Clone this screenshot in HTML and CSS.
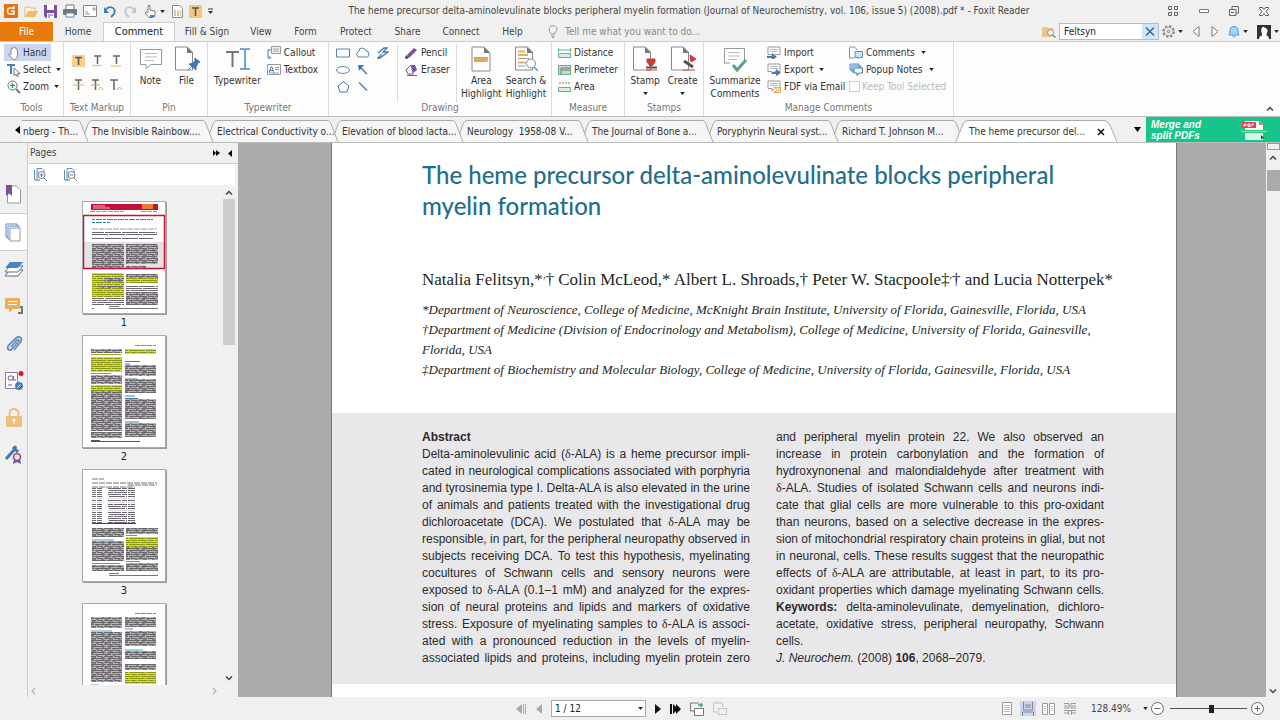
FILE: index.html
```
<!DOCTYPE html>
<html lang="en">
<head>
<meta charset="utf-8">
<title>Foxit Reader</title>
<link rel="stylesheet" href="styles.css">
</head>
<body>
<svg class="defs" aria-hidden="true">
  <defs>
    <pattern id="ink" width="17" height="6" patternUnits="userSpaceOnUse">
      <rect width="17" height="6" fill="#b9b7ba"/>
      <path d="M0 .5h6M7 .5h10M0 2.5h11M12 2.5h5M0 4.5h3M4 4.5h9M14 4.5h3" stroke="#6a666c"/>
      <path d="M2 1.5h2M8 1.5h3M5 3.5h3M13 3.5h2M1 5.5h3M9 5.5h4" stroke="#88838a"/>
    </pattern>
    <pattern id="inky" width="17" height="6" patternUnits="userSpaceOnUse">
      <rect width="17" height="6" fill="#dbe60f"/>
      <path d="M0 .5h6M7 .5h10M0 2.5h11M12 2.5h5M0 4.5h3M4 4.5h9M14 4.5h3" stroke="#8c9414"/>
    </pattern>
    <pattern id="rows" width="17" height="6" patternUnits="userSpaceOnUse">
      <path d="M0 .5h4M5 .5h12M0 2.5h8M9 2.5h8M0 4.5h13M14 4.5h3" stroke="#6a6570"/>
    </pattern>
    <symbol id="caret" viewBox="0 0 6 4"><path d="M0 0h6L3 4z" fill="#222"/></symbol>
    <symbol id="note" viewBox="0 0 14 12"><path d="M1 1h12v7.500H8L5 11V8.500H1z" fill="#fff" stroke="#999"/><path d="M3 3.500h8M3 5.500h8" stroke="#bbb"/></symbol>
    <symbol id="slant" viewBox="0 0 14 22"><path d="M-1 .5C2 .5 2 2 3 4L10 22H4L7 14 10 4C11 2 12 .5 15 .5V22H-1z" fill="#f6f6f6"/><path d="M-1 .5C2 .5 2 2 3 4L10 22M6.500 14L10 4C11 2 12 .5 15 .5" fill="none" stroke="#aaa"/></symbol>
    <symbol id="up" viewBox="0 0 8 5"><path d="M1 4.500L4 1.500 7 4.500" fill="none" stroke="#444" stroke-width="1.500"/></symbol>
    <symbol id="page" viewBox="0 0 20 26"><path d="M1 1h12l6 6v18H1z" fill="#fff" stroke="#888"/><path d="M13 1v6h6z" fill="#777"/></symbol>
  </defs>
</svg>
<div class="app">
  <header class="titlebar">
    <div class="quick">
      <svg width="14" height="14" viewBox="0 0 14 14"><rect width="14" height="14" rx="1" fill="#e8710c"/><path d="M10 4H6Q3.500 4 3.500 7t2.500 3h4V7H7M10 2v3" fill="none" stroke="#fff" stroke-width="1.500"/></svg>
      <button aria-label="Open"><svg width="14" height="13" viewBox="0 0 14 13"><path d="M1 12V2h4l1 1h5v3" fill="#fff3d9" stroke="#e2b873"/><path d="M1 12L4 6h10l-3 6z" fill="#eebb6c"/></svg></button>
      <button aria-label="Save"><svg width="13" height="13" viewBox="0 0 13 13"><path d="M0 0h13v13H2L0 11z" fill="#79509c"/><path d="M3 0h7v5H3zM3 8h7v5H3z" fill="#fff"/><path d="M4 10h5M4 12h2" stroke="#79509c"/></svg></button>
      <button aria-label="Print"><svg width="14" height="14" viewBox="0 0 14 14"><path d="M3 5V1h8v4" fill="#fff" stroke="#777"/><rect y="5" width="14" height="6" rx="1" fill="#777"/><path d="M3 9h8v4H3z" fill="#fff" stroke="#5b8bb8"/></svg></button>
      <button aria-label="Email"><svg width="14" height="12" viewBox="0 0 14 12"><path d="M.5.5h13v11H.5z" fill="#fff" stroke="#888"/><path d="M2 9h5M2 7h3M10 3h2v2h-2z" stroke="#999" fill="none"/></svg></button>
      <button aria-label="Undo"><svg width="14" height="13" viewBox="0 0 14 13"><path d="M2 6Q5 1 9 2.500T11 9L8 12" fill="none" stroke="#447bb0" stroke-width="1.800"/><path d="M1 2v6h5z" fill="#447bb0"/></svg></button>
      <button aria-label="Redo"><svg width="14" height="13" viewBox="0 0 14 13"><path d="M12 6Q9 1 5 2.500T3 9l3 3" fill="none" stroke="#c3c6c9" stroke-width="1.800"/><path d="M13 2v6H8z" fill="#c3c6c9"/></svg></button>
      <button class="handtool" aria-label="Touch mode"><svg width="13" height="14" viewBox="0 0 13 14"><path d="M4 8V2q1-2 2 0v4l5 1v4l-2 2.500H5L1 9q1-2 3 0" fill="#fff" stroke="#707880"/><path d="M6 12h5" stroke="#4a80b5" stroke-width="2"/></svg><svg width="5" height="3"><use href="#caret"/></svg></button>
      <button aria-label="Form"><svg width="11" height="13" viewBox="0 0 11 13"><path d="M.5.5h7l3 3v9H.5z" fill="#fff" stroke="#888"/><path d="M2 6h7M2 8h7M2 10h7" stroke="#a8894b" stroke-dasharray="2 1"/></svg></button>
      <button aria-label="Highlight"><svg width="13" height="13" viewBox="0 0 13 13"><rect width="13" height="13" fill="#f4c67c"/><path d="M3 3h7M6.500 3v8" stroke="#555" stroke-width="1.500"/></svg></button>
      <button aria-label="Customize"><svg width="5" height="7" viewBox="0 0 5 7"><path d="M0 1h5" stroke="#333"/><path d="M0 3h5L2.500 6z" fill="#333"/></svg></button>
    </div>
    <h1 class="doctitle">The heme precursor delta-aminolevulinate blocks peripheral myelin formation (Journal of Neurochemistry, vol. 106, issue 5) (2008).pdf * - Foxit Reader</h1>
    <div class="winbtns">
      <button aria-label="Arrange"><svg width="12" height="11" viewBox="0 0 12 11" fill="none" stroke="#666"><path d="M1.500.5h3v3h-3zM7.500.5h3v3h-3zM1.500 6.500h3v3h-3zM7.500 6.500h3v3h-3z"/></svg></button>
      <button aria-label="Minimize"><svg width="10" height="4" viewBox="0 0 10 4"><path d="M.5.5h9v3h-9z" fill="#fff" stroke="#777"/></svg></button>
      <button aria-label="Restore"><svg width="10" height="10" viewBox="0 0 10 10"><path d="M3 3V.5h6.500V7H7M.5 3.500H7v6H.5zM2 6.500h3" fill="none" stroke="#666"/></svg></button>
      <button aria-label="Close"><svg width="10" height="9" viewBox="0 0 10 9"><path d="M.5.500h3L5 2.500 6.500.5h3v1L7 4.500l2.500 3v1h-3L5 6.500 3.500 8.500h-3v-1L3 4.500.5 1.500z" fill="#fff" stroke="#555"/></svg></button>
    </div>
  </header>

  <nav class="menubar">
    <button class="mtab file">File</button>
    <button class="mtab home">Home</button>
    <button class="mtab active">Comment</button>
    <button class="mtab fill">Fill &amp; Sign</button>
    <button class="mtab view">View</button>
    <button class="mtab form">Form</button>
    <button class="mtab protect">Protect</button>
    <button class="mtab share">Share</button>
    <button class="mtab connect">Connect</button>
    <button class="mtab help">Help</button>
    <button class="mtab tell"><svg width="10" height="13" viewBox="0 0 10 13" fill="none" stroke="#999"><path d="M3 9Q3 8 1.500 6.500 0 3 3 1q4-1.500 6 2 .5 2-1 3.500T7 9zM3 11h4M4 12.500h2"/></svg>Tell me what you want to do...</button>
    <div class="find">
      <svg width="14" height="12" viewBox="0 0 14 12"><path d="M0 1h5l1 1h5v9H0z" fill="#edc58b"/><circle cx="8.500" cy="6.500" r="3" fill="#fff" stroke="#888"/><path d="M11 9l2.500 2.500" stroke="#888" stroke-width="1.500"/></svg>
      <div class="findbox"><input type="text" value="Feltsyn" aria-label="Find"><button aria-label="Clear"><svg width="10" height="9" viewBox="0 0 10 9"><path d="M1 .5l8 8M9 .5l-8 8" stroke="#2d6ba0" stroke-width="1.500"/></svg></button></div>
      <button aria-label="Settings"><svg width="13" height="13" viewBox="0 0 13 13" fill="none" stroke="#777"><circle cx="6.500" cy="6.500" r="5.500" stroke-dasharray="2.500 1.800" stroke-width="1.500"/><circle cx="6.500" cy="6.500" r="4.200" stroke="#999"/><circle cx="6.500" cy="6.500" r="1.200"/></svg><svg width="5" height="3"><use href="#caret"/></svg></button>
      <button aria-label="Previous"><svg width="8" height="11" viewBox="0 0 8 11"><path d="M7 .5v10L1 5.500z" fill="#fff" stroke="#777"/></svg></button>
      <button aria-label="Next" class="next"><svg width="8" height="11" viewBox="0 0 8 11"><path d="M1 .5v10l6-5z" fill="#fff" stroke="#777"/></svg></button>
      <button aria-label="Notifications"><svg width="12" height="13" viewBox="0 0 12 13"><path d="M1 10q1-1 1-4 0-4.500 4-4.500T10 6q0 3 1 4z" fill="#a8d4f6" stroke="#5591c4"/><path d="M4.500 11q1.500 2 3 0" stroke="#5591c4" fill="none"/></svg><svg width="5" height="3"><use href="#caret"/></svg></button>
      <button aria-label="Account" class="acct"><svg width="14" height="14" viewBox="0 0 14 14"><path d="M0 0h14v14H0z" fill="#333"/><path d="M2 14q0-3 3-3.500V9Q3.500 6 4.500 3.500T7 2t3 2-.5 5v1.500Q12 11 12 14z" fill="#fff"/></svg><svg width="5" height="3"><use href="#caret"/></svg></button>
    </div>
  </nav>

  <section class="ribbon">
    <div class="group g-tools">
      <div class="gbody col">
        <button class="row on"><svg width="14" height="14" viewBox="0 0 14 14"><path d="M4 8V3q1-1.500 1.500 0V2Q6.500 0 7.300 2q1-1.500 1.700 0v1.500q1-1.500 1.500 0V9q0 3.500-2.500 4.500H6L1.500 8.500Q2 7 4 8.500z" fill="#fff" stroke="#889"/></svg>Hand</button>
        <button class="row"><svg width="14" height="14" viewBox="0 0 14 14"><path d="M0 2h8M4 2v9" stroke="#477fb5" stroke-width="2" fill="none"/><path d="M7 5v8l2-2 1 2.500 1.500-.5-1-2.500H13z" fill="#fff" stroke="#777"/></svg>Select<svg class="car" width="5" height="3"><use href="#caret"/></svg></button>
        <button class="row"><svg width="14" height="14" viewBox="0 0 14 14" fill="none"><circle cx="5.500" cy="5.500" r="4.500" stroke="#769"/><path d="M3 5.500h5M5.500 3v5" stroke="#43a06f" stroke-width="1.500"/><path d="M9 9l4 4" stroke="#777" stroke-width="2"/></svg>Zoom<svg class="car" width="5" height="3"><use href="#caret"/></svg></button>
      </div>
      <div class="glabel">Tools</div>
    </div>
    <div class="group g-markup">
      <div class="gbody markup">
        <button aria-label="Highlight text"><svg width="13" height="14" viewBox="0 0 13 14"><path d="M0 1h13v12H0z" fill="#f8cf8e"/><path d="M3 3.500h7M6.500 3v8" stroke="#555" stroke-width="1.600"/></svg></button>
        <button aria-label="Squiggly"><svg width="13" height="14" viewBox="0 0 13 14" fill="none"><path d="M3 2h7M6.500 2v8" stroke="#666" stroke-width="1.500"/><path d="M1 12l2-1 2 1 2-1 2 1 2-1" stroke="#eab05a"/></svg></button>
        <button aria-label="Underline"><svg width="13" height="14" viewBox="0 0 13 14" fill="none"><path d="M3 2h7M6.500 2v8" stroke="#666" stroke-width="1.500"/><path d="M1 12h10" stroke="#eab05a"/></svg></button>
        <button aria-label="Strikeout"><svg width="13" height="14" viewBox="0 0 13 14" fill="none"><path d="M3 2h7M6.500 2v10" stroke="#666" stroke-width="1.500"/><path d="M1 7h11" stroke="#eab05a"/></svg></button>
        <button aria-label="Replace"><svg width="14" height="14" viewBox="0 0 14 14" fill="none"><path d="M2 2h7M5.500 2v10" stroke="#666" stroke-width="1.500"/><path d="M1 7h9M8 12l2.500-3 3 3" stroke="#e59a54"/></svg></button>
        <button aria-label="Insert"><svg width="14" height="14" viewBox="0 0 14 14" fill="none"><path d="M1 2h8M5 2v10" stroke="#666" stroke-width="1.500"/><path d="M8 12l2.500-3 3 3" stroke="#e59a54"/></svg></button>
      </div>
      <div class="glabel">Text Markup</div>
    </div>
    <div class="group g-pin">
      <div class="gbody bigs">
        <button class="big"><svg width="24" height="26" viewBox="0 0 24 26"><path d="M1.500 3.500h21v15H12l-5 4v-4H1.500z" fill="#fff" stroke="#999"/><path d="M6 7.500h12M6 11h12M6 14.500h9" stroke="#bbb"/></svg>Note</button>
        <button class="big"><svg width="26" height="26" viewBox="0 0 26 26"><path d="M1.500 1h12l5 5v18h-17z" fill="#fff" stroke="#888"/><path d="M13 1v6h6z" fill="#777"/><path d="M21 12l5 4-2 1-2 4 0 3-7-6 3-.5 3-2.500zM18 20l-4 4" fill="#4479ae" stroke="#4479ae"/></svg>File</button>
      </div>
      <div class="glabel">Pin</div>
    </div>
    <div class="group g-type">
      <div class="gbody bigs">
        <button class="big"><svg width="26" height="26" viewBox="0 0 26 26" fill="none"><path d="M2 6h13M8.500 6v15" stroke="#777" stroke-width="2"/><path d="M16 3h4l1 1 1-1h4M21 4v18M16 23h4l1-1 1 1h4" stroke="#4a8bc5" stroke-width="1.500"/></svg>Typewriter</button>
        <div class="col">
          <button class="row"><svg width="14" height="13" viewBox="0 0 14 13" fill="none"><path d="M4.500.5h9v7h-9z" fill="#eee" stroke="#999"/><path d="M6 3h6M6 5h6" stroke="#aaa"/><path d="M4 4H1v8h3M2.500 10.500L4 12" stroke="#4479ae"/></svg>Callout</button>
          <button class="row"><svg width="14" height="11" viewBox="0 0 14 11"><path d="M.5.500h13v10H.5z" fill="#fff" stroke="#999"/><path d="M2 9l2-6h1l2 6M3 6.500h3" stroke="#4479ae" fill="none"/><path d="M8 3.500h4M8 5.500h4M3 9h9" stroke="#99a"/></svg>Textbox</button>
        </div>
      </div>
      <div class="glabel">Typewriter</div>
    </div>
    <div class="group g-draw">
      <div class="gbody">
        <div class="shapes">
          <button aria-label="Rectangle"><svg width="14" height="10" viewBox="0 0 14 10"><path d="M.5 1h13v8H.5z" fill="#fff" stroke="#5584b4"/></svg></button>
          <button aria-label="Cloud"><svg width="14" height="11" viewBox="0 0 14 11"><path d="M2 10Q0 8 1 6l2-2q0-3 3-3t4 3q3 0 3 3t-2 3z" fill="#fff" stroke="#5584b4"/></svg></button>
          <button aria-label="Polyline"><svg width="12" height="12" viewBox="0 0 12 12"><path d="M1 6l6-5h3L6 5h5l-8 6H1l4-4" fill="none" stroke="#4479ae" stroke-width="1.300"/></svg></button>
          <button aria-label="Oval"><svg width="14" height="8" viewBox="0 0 14 8"><ellipse cx="7" cy="4" rx="6.500" ry="3.400" fill="#fff" stroke="#5584b4"/></svg></button>
          <button aria-label="Arrow"><svg width="11" height="10" viewBox="0 0 11 10"><path d="M1 1l8 8" stroke="#4479ae" stroke-width="1.500"/><path d="M0 0h6L1 6z" fill="#4479ae"/></svg></button>
          <span></span>
          <button aria-label="Polygon"><svg width="13" height="12" viewBox="0 0 13 12"><path d="M6.500.700l5.500 4.300-2 6H3L1 5z" fill="#fff" stroke="#4479ae"/></svg></button>
          <button aria-label="Line"><svg width="10" height="9" viewBox="0 0 10 9"><path d="M1 .5l8 8" stroke="#4479ae" stroke-width="1.300"/></svg></button>
        </div>
        <div class="col pencils">
          <button class="row"><svg width="13" height="12" viewBox="0 0 13 12"><path d="M0 12l1-4 3 3z" fill="#333"/><path d="M2 8l7-7 3 2-8 8z" fill="#79509c"/></svg>Pencil</button>
          <button class="row"><svg width="13" height="12" viewBox="0 0 13 12"><path d="M6 1h4l2 5-4 3z" fill="#79509c"/><path d="M6 1L1 6l2 4h5V8z" fill="#fff" stroke="#79509c"/><path d="M2 11.500h10" stroke="#79509c"/></svg>Eraser</button>
        </div>
        <div class="bigs hl">
          <button class="big"><svg width="20" height="26" viewBox="0 0 20 26"><use href="#page"/><path d="M3 11h14v5H3z" fill="#f0c078"/><path d="M3 11l3 5 3-5 3 5 3-5 2 3M3 16l3-5 3 5 3-5 3 5" stroke="#d0923c" fill="none"/></svg>Area<br>Highlight</button>
          <button class="big"><svg width="24" height="26" viewBox="0 0 24 26"><path d="M1.500 1h12l5 5v18h-17z" fill="#fff" stroke="#888"/><path d="M13 1v6h6z" fill="#777"/><path d="M4 5.500h7M4 9h10M4 16.500h8" stroke="#eab05a" stroke-width="2"/><path d="M4 12.500h11M4 20h7" stroke="#999"/><circle cx="17" cy="17.500" r="4.500" fill="#fff" stroke="#5b8fca"/><path d="M20 21l4 4" stroke="#5b8fca" stroke-width="1.500"/></svg>Search &amp;<br>Highlight</button>
        </div>
      </div>
      <div class="glabel">Drawing</div>
    </div>
    <div class="group g-measure">
      <div class="gbody col">
        <button class="row"><svg width="13" height="12" viewBox="0 0 13 12" fill="none"><path d="M.5 1v4M12.500 1v4M1 3h11" stroke="#62b08d"/><path d="M.5 6.500h12v4H.5z" stroke="#62b08d" fill="#d9efe4"/></svg>Distance</button>
        <button class="row"><svg width="13" height="12" viewBox="0 0 13 12" fill="none"><path d="M.5 1.500h12v9H.5z" stroke="#62b08d" fill="#bfe0d0"/><path d="M3 4h9M3 6h9M3 4v6" stroke="#777"/></svg>Perimeter</button>
        <button class="row"><svg width="13" height="12" viewBox="0 0 13 12" fill="none"><path d="M1 2h11" stroke="#777" stroke-dasharray="2 1"/><path d="M.5 6.500h12v4H.5z" stroke="#62b08d" fill="#d9efe4"/></svg>Area</button>
      </div>
      <div class="glabel">Measure</div>
    </div>
    <div class="group g-stamps">
      <div class="gbody bigs">
        <button class="big"><svg width="26" height="26" viewBox="0 0 26 26"><path d="M1.500 1h12l5 5v18h-17z" fill="#fff" stroke="#888"/><path d="M13 1v6h6z" fill="#777"/><path d="M15 13h8v3l-3 4h-2l-3-4zM14 24h11" fill="#cf3a31" stroke="#cf3a31"/><path d="M14 21.500h11" stroke="#555" stroke-width="2"/></svg>Stamp<svg class="down" width="5" height="3"><use href="#caret"/></svg></button>
        <button class="big"><svg width="26" height="26" viewBox="0 0 26 26"><path d="M1.500 1h12l5 5v18h-17z" fill="#fff" stroke="#888"/><path d="M13 1v6h6z" fill="#777"/><path d="M20 9l6 4-5 3zM13 24h12" fill="#cf3a31" stroke="#cf3a31"/><path d="M14 15l9 6" stroke="#555" stroke-width="3"/></svg>Create<svg class="down" width="5" height="3"><use href="#caret"/></svg></button>
      </div>
      <div class="glabel">Stamps</div>
    </div>
    <div class="group g-manage">
      <div class="gbody bigs">
        <button class="big"><svg width="26" height="26" viewBox="0 0 26 26" fill="none"><path d="M2.500 17V2.500h20v14M2 17h6" stroke="#999"/><path d="M6 6.500h12M6 10h12M6 13.500h9" stroke="#bbb"/><path d="M11 19l4 5 9-10" stroke="#58a386" stroke-width="3"/></svg>Summarize<br>Comments</button>
        <div class="col c1">
          <button class="row"><svg width="14" height="13"><use href="#note" width="14" height="12"/><path d="M0 11h6" stroke="#4479ae" stroke-width="2"/><path d="M5 7l5 4-5 3z" fill="#4479ae"/></svg>Import</button>
          <button class="row"><svg width="14" height="13"><use href="#note" width="14" height="12"/><path d="M5 10h5" stroke="#4479ae" stroke-width="2"/><path d="M9 6l5 4-5 3z" fill="#4479ae"/></svg>Export<svg class="car" width="5" height="3"><use href="#caret"/></svg></button>
          <button class="row"><svg width="14" height="13"><use href="#note" width="14" height="12"/><path d="M6.500 7.500h7v5h-7l3.500-2" fill="#f7d49a" stroke="#e9a64c"/></svg>FDF via Email</button>
        </div>
        <div class="col">
          <button class="row"><svg width="14" height="13" viewBox="0 0 14 13"><path d="M.5 1.500V12h5M.5 1h5l3 3" fill="none" stroke="#888"/><path d="M6 5.500h7.500v6h-3l-1.500 1v-1H6z" fill="#cfe1f3" stroke="#5b8fca"/></svg>Comments<svg class="car" width="5" height="3"><use href="#caret"/></svg></button>
          <button class="row"><svg width="14" height="13" viewBox="0 0 14 13"><path d="M1 1h9v6H1zM3 3h9v6H3z" fill="#cfe1f3" stroke="#5b8fca"/><path d="M5 5h8.500v5H10l-2 2.500V10H5z" fill="#fff" stroke="#4479ae"/></svg>Popup Notes<svg class="car" width="5" height="3"><use href="#caret"/></svg></button>
          <label class="row keep"><input type="checkbox" disabled>Keep Tool Selected</label>
        </div>
      </div>
      <div class="glabel">Manage Comments</div>
    </div>
    <button class="collapse" aria-label="Collapse ribbon"><svg width="8" height="5"><use href="#up"/></svg></button>
  </section>

  <div class="tabs">
    <button class="scroll-l" aria-label="Scroll tabs left"><svg width="5" height="8" viewBox="0 0 5 8"><path d="M5 0v8L0 4z"/></svg></button>
    <button class="dtab first"><span>nberg - Th...</span></button>
    <svg width="14" height="22"><use href="#slant"/></svg>
    <button class="dtab">The Invisible Rainbow....</button>
    <svg width="14" height="22"><use href="#slant"/></svg>
    <button class="dtab">Electrical Conductivity o...</button>
    <svg width="14" height="22"><use href="#slant"/></svg>
    <button class="dtab">Elevation of blood lacta...</button>
    <svg width="14" height="22"><use href="#slant"/></svg>
    <button class="dtab">Neurology&nbsp; 1958-08 V...</button>
    <svg width="14" height="22"><use href="#slant"/></svg>
    <button class="dtab">The Journal of Bone a...</button>
    <svg width="14" height="22"><use href="#slant"/></svg>
    <button class="dtab">Poryphyrin Neural syst...</button>
    <svg width="14" height="22"><use href="#slant"/></svg>
    <button class="dtab">Richard T. Johnson M...</button>
    <svg width="14" height="22" viewBox="0 0 14 22"><path d="M3 22L10 4Q11 .5 15 .5V22z" fill="#fff"/><path d="M-1 .5Q3 .5 4 5L6.500 12M3 22L10 4Q11 .5 15 .5" fill="none" stroke="#aaa"/></svg>
    <button class="dtab current"><span>The heme precursor del...</span><svg width="8" height="8" viewBox="0 0 8 8"><path d="M1 1l6 6M7 1L1 7" stroke="#111" stroke-width="1.500"/></svg></button>
    <svg width="14" height="22" viewBox="0 0 14 22"><path d="M-1 .5Q3 .5 5 5l7 17H-1z" fill="#fff"/><path d="M-1 .5Q3 .5 5 5l7 17" fill="none" stroke="#aaa"/></svg>
    <button class="tablist" aria-label="Tab list"><svg width="7" height="5" viewBox="0 0 7 5"><path d="M0 0h7L3.500 5z"/></svg></button>
    <a class="banner" href="#"><span>Merge and<br>split PDFs</span>
      <svg width="26" height="22" viewBox="0 0 26 22"><path d="M4 2h14l4 4v5H4z" fill="#fff"/><path d="M18 2v4h4z" fill="#ef6a7b"/><rect x="1" y="3" width="14" height="6" fill="#e83e58"/><path d="M3 7.500V5h2v1.500H3M7 5h2v2.500H7zM11 7.500V5h2" stroke="#fff" fill="none"/><path d="M0 12.500h26" stroke="#8ce63c" stroke-width="1.500"/><path d="M4 14h18v7H4z" fill="#d6f3e8"/><path d="M20 16l3 3-3 1z" fill="#333"/></svg></a>
  </div>

  <main class="main">
    <nav class="rail">
      <button aria-label="Bookmarks"><svg width="16" height="19" viewBox="0 0 16 19"><path d="M1.500 1h9l4 4v13h-13z" fill="#fff" stroke="#999"/><path d="M0 0h6v11L3 8.500 0 11z" fill="#79509c"/></svg></button>
      <button aria-label="Pages" class="sel"><svg width="17" height="19" viewBox="0 0 17 19" fill="#fff" stroke="#5b8cbe"><path d="M1 1h11v13H1z"/><path d="M3 3h11v13H3z"/><path d="M5 5h10v13H5z" stroke="#999"/></svg></button>
      <button aria-label="Layers"><svg width="20" height="17" viewBox="0 0 20 17"><path d="M6 9h13l-5 6H1z" fill="#fff" stroke="#666"/><path d="M6 5h13l-5 6H1z" fill="#fff" stroke="#4479ae"/><path d="M6 1h13l-5 6H1z" fill="#4a84bd"/></svg></button>
      <button aria-label="Comments"><svg width="18" height="17" viewBox="0 0 18 17"><path d="M9 9h8v6h-4" fill="none" stroke="#777" stroke-width="2"/><path d="M0 0h15v11H8l-4 4v-4H0z" fill="#efac55"/><path d="M3 3.500h9M3 6.500h9" stroke="#fff"/></svg></button>
      <button aria-label="Attachments"><svg width="18" height="18" viewBox="0 0 18 18" fill="none" stroke="#6991b8" stroke-width="1.800"><path d="M6 12l6-7q2-1 2 1l-7 8q-2 2-4 0-1-2 1-4l7-7q3-2 5 0 1 2-1 5l-6 7"/></svg></button>
      <button aria-label="Signatures"><svg width="20" height="19" viewBox="0 0 20 19"><path d="M1.500 1.500h12v16h-12z" fill="#fff" stroke="#8a7aa6"/><path d="M8 5Q4 4 4 7t4 2q3-2 1-4v4h3M4 14h4" fill="none" stroke="#79509c"/><circle cx="17" cy="2.500" r="2.500" fill="#e0122a"/><circle cx="15" cy="15" r="4" fill="#4a7fb2"/><path d="M13.500 16.500l3-3" stroke="#fff"/></svg></button>
      <button aria-label="Security"><svg width="16" height="19" viewBox="0 0 16 19"><path d="M3.500 8V5Q4 1 8 1t4.500 4v3" fill="none" stroke="#ecc07c" stroke-width="2"/><rect y="8" width="16" height="11" rx="1" fill="#ecc07c"/><circle cx="8" cy="12" r="1.500" fill="#fff"/><path d="M8 12v4" stroke="#fff"/></svg></button>
      <button aria-label="Digital signatures"><svg width="18" height="19" viewBox="0 0 18 19"><path d="M1 14L10 4M8 2l5 5M11 1l-2 3" stroke="#4479ae" stroke-width="3" fill="none"/><path d="M9 14l-1 5 4-2 4 2-1-5" fill="#79509c"/><circle cx="12" cy="12" r="3.500" fill="#f5dcc0" stroke="#79509c" stroke-width="1.500"/></svg></button>
    </nav>
    <aside class="pages">
      <div class="phead"><span>Pages</span><button aria-label="Expand"><svg width="7" height="6" viewBox="0 0 7 6"><path d="M0 0l3 3-3 3zM3 0l4 3-4 3z"/></svg></button><button aria-label="Hide"><svg width="4" height="7" viewBox="0 0 4 7"><path d="M4 0v7L0 3.500z"/></svg></button></div>
      <div class="ptools">
        <button aria-label="Enlarge thumbnails"><svg width="13" height="14" viewBox="0 0 13 14" fill="none"><path d="M.5 2v10h4M3 12V.5h5l2 2V4M3 12h3" stroke="#5b8cbe"/><circle cx="7.500" cy="7" r="3.500" fill="#fff" stroke="#777"/><path d="M5.500 7h4M7.500 5v4M10 10l3 3" stroke="#5b8cbe"/></svg></button>
        <button aria-label="Reduce thumbnails"><svg width="13" height="14" viewBox="0 0 13 14" fill="none"><path d="M.5 2v10h4M3 12V.5h5l2 2V4M3 12h3" stroke="#5b8cbe"/><circle cx="7.500" cy="7" r="3.500" fill="#fff" stroke="#777"/><path d="M5.500 7h4M10 10l3 3" stroke="#5b8cbe"/></svg></button>
      </div>
      <div class="plist">
        <div class="thumbs">
          <figure><svg class="thumb" viewBox="0 0 82 111">
            <path d="M8 2h67v6H8z" fill="#c40f38"/><path d="M59 2h11v5H59z" fill="#ec7a2e"/><path d="M10 4h12M10 6h17" stroke="#f3b5c2"/><path d="M7 9.500h34M58 9.500h16" stroke="#999" stroke-dasharray="5 1"/>
            <path d="M9 17.500h61M9 20.500h18" stroke="#2f88a3" stroke-dasharray="3 1 6 1"/><path d="M9 27h65" stroke="#999" stroke-dasharray="6 1"/><path d="M9 30h65v4H9zM9 35h61v2H9z" fill="url(#rows)"/>
            <path d="M0 40h82v27H0z" fill="#e3e3e5"/><path d="M9 42h32v24H9zM43 42h32v20H43zM43 64h20v2H43z" fill="url(#ink)"/>
            <path d="M9 71h32v24H9zM43 72h32v9H43z" fill="url(#inky)"/><path d="M21 76h20v4H21zM15 84h26v2H15zM43 72h32v4H43z" fill="url(#ink)"/><path d="M9 96h32v7H9zM43 84h32v5H43z" fill="url(#rows)"/><path d="M43 90h32v13H43z" fill="url(#ink)"/><path d="M9 106.500h2M26 104.500h10M26 106.500h49" stroke="#777"/>
            <path d="M.5 13.500h81v53H.5z" fill="none" stroke="#d40b33" stroke-width="1.500"/></svg><figcaption>1</figcaption></figure>
          <figure><svg class="thumb" viewBox="0 0 82 111">
            <path d="M52 9.500h21" stroke="#888" stroke-dasharray="5 1"/><path d="M8 13h31v4H8zM8 39h31v9H8zM8 55h31v40H8zM8 96h31v6H8zM42 29h31v11H42zM42 43h31v14H42zM42 63h31v20H42zM42 87h31v14H42z" fill="url(#ink)"/>
            <path d="M8 21h31v15H8zM8 49h31v6H8zM42 13h31v5H42z" fill="url(#inky)"/><path d="M8 18.500h30M8 37.500h20" stroke="#9ba21a"/><path d="M42 25.500h15M42 28h5M42 43h12M42 60h10M42 62.500h13M42 86h14" stroke="#3f80a5"/><path d="M8 104h9v1H8zM8 105h49v1H8z" fill="#555"/></svg><figcaption>2</figcaption></figure>
          <figure><svg class="thumb" viewBox="0 0 82 111">
            <path d="M9 9h12M9 13h65M45 15h29M9 17h43" stroke="#777" stroke-dasharray="6 1"/><path d="M9 18h4v35H9zM14 18h5v35h-5zM25 18h19v35H25zM45 18h7v35h-7z" fill="url(#rows)"/><path d="M9 29h44M9 33h44M9 41h44" stroke="#fff" stroke-width="1.500"/><path d="M9 53.500h44" stroke="#444"/>
            <path d="M9 58h32v9H9zM9 71h32v20H9zM9 95h32v6H9zM43 58h32v6H43zM43 77h32v13H43zM43 93h32v8H43z" fill="url(#ink)"/><path d="M43 67h32v10H43z" fill="url(#inky)"/><path d="M9 70h22M9 93.500h28M43 65.500h11M43 91.500h14" stroke="#4e9ebd"/><path d="M26 103.500h10M26 105.500h49" stroke="#777"/></svg><figcaption>3</figcaption></figure>
          <figure><svg class="thumb" viewBox="0 0 82 111">
            <path d="M52 9.500h21" stroke="#888" stroke-dasharray="5 1"/><path d="M8 13h31v11H8zM8 28h31v50H8zM42 13h31v10H42zM42 27h31v15H42zM42 47h31v8H42zM42 60h31v6H42zM42 82h31v20H42z" fill="url(#ink)"/><path d="M42 68h31v12H42z" fill="url(#inky)"/><path d="M8 27h21M42 25h8M42 46h18M8 81h8" stroke="#4e9ebd"/></svg></figure>
        </div>
        <div class="vs"><svg width="8" height="5"><use href="#up"/></svg><i></i><svg class="flip" width="8" height="5"><use href="#up"/></svg></div>
      </div>
      <div class="hs"><svg width="5" height="8" viewBox="0 0 5 8"><path d="M4 1L1 4l3 3" fill="none" stroke="#bbb" stroke-width="1.500"/></svg><svg width="5" height="8" viewBox="0 0 5 8"><path d="M1 1l3 3-3 3" fill="none" stroke="#bbb" stroke-width="1.500"/></svg></div>
    </aside>
    <div class="viewer">
      <article class="paper">
        <h2>The heme precursor delta-aminolevulinate blocks peripheral<br>myelin formation</h2>
        <p class="authors">Natalia Felitsyn,*<sup>,</sup>† Colin McLeod,* Albert L. Shroads,† Peter W. Stacpoole‡<sup>,</sup>† and Lucia Notterpek*</p>
        <p class="affil">*Department of Neuroscience, College of Medicine, McKnight Brain Institute, University of Florida, Gainesville, Florida, USA<br>†Department of Medicine (Division of Endocrinology and Metabolism), College of Medicine, University of Florida, Gainesville,<br>Florida, USA<br>‡Department of Biochemistry and Molecular Biology, College of Medicine, University of Florida, Gainesville, Florida, USA</p>
        <div class="abstract">
          <div class="acol">
            <h3>Abstract</h3>
            <p>Delta-aminolevulinic acid (<i class="d">δ</i>-ALA) is a heme precursor impli-<br>cated in neurological complications associated with porphyria<br>and tyrosinemia type I. Delta-ALA is also elevated in the urine<br>of animals and patients treated with the investigational drug<br>dichloroacetate (DCA). We postulated that <i class="d">δ</i>-ALA may be<br>responsible, in part, for the peripheral neuropathy observed in<br>subjects receiving DCA. To test this hypothesis, myelinating<br>cocultures of Schwann cells and sensory neurons were<br>exposed to <i class="d">δ</i>-ALA (0.1–1 mM) and analyzed for the expres-<br>sion of neural proteins and lipids and markers of oxidative<br>stress. Exposure of myelinating samples to <i class="d">δ</i>-ALA is associ-<br>ated with a pronounced reduction in the levels of myelin-<br>associated lipids and proteins, including myelin protein zero</p>
          </div>
          <div class="acol">
            <p>and peripheral myelin protein 22. We also observed an<br>increase in protein carbonylation and the formation of<br>hydroxynonenal and malondialdehyde after treatment with<br><i class="d">δ</i>-ALA. Studies of isolated Schwann cells and neurons indi-<br>cate that glial cells are more vulnerable to this pro-oxidant<br>than neurons, based on a selective decrease in the expres-<br>sion of mitochondrial respiratory chain proteins in glial, but not<br>in neuronal, cells. These results suggest that the neuropathic<br>effects of <i class="d">δ</i>-ALA are attributable, at least in part, to its pro-<br>oxidant properties which damage myelinating Schwann cells.</p>
            <p><b>Keywords:</b> delta-aminolevulinate, demyelination, dichloro-<br>acetate, oxidative stress, peripheral neuropathy, Schwann</p>
            <p class="ragged">cells.<br><em>J. Neurochem.</em> (2008) <b>106</b>, 2068–2079.</p>
          </div>
        </div>
      </article>
    </div>
    <div class="dscroll"><span class="split"></span><svg width="8" height="5"><use href="#up"/></svg><i></i><svg class="flip" width="8" height="5"><use href="#up"/></svg></div>
  </main>

  <footer class="status">
    <div class="pager">
      <button aria-label="First page"><svg width="11" height="10" viewBox="0 0 11 10" fill="#aaa"><path d="M6 0v10L0 5zM7 0h1v10H7zM9 0h1v10H9z"/></svg></button>
      <button aria-label="Previous page"><svg width="6" height="10" viewBox="0 0 6 10" fill="#aaa"><path d="M6 0v10L0 5z"/></svg></button>
      <div class="pagebox"><select aria-label="Page"><option>1 / 12</option></select><svg width="5" height="3"><use href="#caret"/></svg></div>
      <button aria-label="Next page"><svg width="6" height="10" viewBox="0 0 6 10" fill="#111"><path d="M0 0v10l6-5z"/></svg></button>
      <button aria-label="Last page"><svg width="11" height="10" viewBox="0 0 11 10" fill="#111"><path d="M0 0h2v10H0zM3 0l3 3V0l5 5-5 5V7l-3 3z"/></svg></button>
      <button aria-label="Previous view"><svg width="14" height="14" viewBox="0 0 14 14"><path d="M9 1H.5v8H4" fill="none" stroke="#777"/><path d="M4.500 6.500h9v7h-9z" fill="#fff" stroke="#777"/><path d="M8 3h5M11 1v4" stroke="#4c9f77" stroke-width="1.500"/></svg></button>
      <button aria-label="Next view"><svg width="14" height="14" viewBox="0 0 14 14" fill="none" stroke="#c4c4c4"><path d="M4 10H.5V1h9v4M5.500 6.500h8v6h-8z"/></svg></button>
    </div>
    <div class="views">
      <button aria-label="Single page"><svg width="10" height="13" viewBox="0 0 10 13"><path d="M.5.5h9v12h-9z" fill="#fff" stroke="#999"/><path d="M2 3.500h6M2 5.500h6M2 7.500h6M2 9.500h6" stroke="#bbb"/></svg></button>
      <button aria-label="Continuous" class="von"><svg width="12" height="14" viewBox="0 0 12 14" fill="none" stroke="#888"><path d="M1.500 0v8h9V0M.5 14v-4h11v4M3 3h6M3 5h6"/></svg></button>
      <button aria-label="Facing"><svg width="13" height="12" viewBox="0 0 13 12"><path d="M.5.5h5v11h-5zM7.500.5h5v11h-5z" fill="#fff" stroke="#999"/><path d="M2 3.500h2M2 5.500h2M2 7.500h2M9 3.500h2M9 5.500h2M9 7.500h2" stroke="#bbb"/></svg></button>
      <button aria-label="Continuous facing"><svg width="12" height="13" viewBox="0 0 12 13" fill="none" stroke="#999"><path d="M0 1.500h5V6H0M12 1.500H7V6h5M0 8.500h12M4.500 8v5M7.500 8v5M0 4h4M8 4h4M0 11h4M8 11h4"/></svg></button>
    </div>
    <button class="pct">128.49% <svg width="5" height="3"><use href="#caret"/></svg></button>
    <button aria-label="Zoom out"><svg width="13" height="13" viewBox="0 0 13 13" fill="#fff" stroke="#666"><circle cx="6.500" cy="6.500" r="6"/><path d="M3.500 6.500h6"/></svg></button>
    <input class="zoom" type="range" min="0" max="100" value="54" aria-label="Zoom level">
    <button aria-label="Zoom in"><svg width="13" height="13" viewBox="0 0 13 13" fill="#fff" stroke="#666"><circle cx="6.500" cy="6.500" r="6"/><path d="M3.500 6.500h6M6.500 3.500v6"/></svg></button>
  </footer>
</div>
</body>
</html>
```
FILE: styles.css
```
* { box-sizing: border-box; }
html, body { height: 100%; }
body {
  margin: 0;
  overflow: hidden;
  background: #f0f0f0;
  color: #444;
  font: 10px/14px "DejaVu Sans Condensed", "DejaVu Sans", sans-serif;
}
button {
  display: inline-flex;
  align-items: center;
  gap: 3px;
  margin: 0;
  padding: 0;
  border: 0;
  background: none;
  color: inherit;
  font: inherit;
  white-space: nowrap;
}
svg { display: block; flex: none; }
h1, h2, h3, p, figure { margin: 0; font-weight: normal; }
.defs { position: absolute; width: 0; height: 0; }
.app { display: flex; flex-direction: column; height: 100vh; }

/* Title bar */
.titlebar { display: flex; align-items: center; height: 22px; flex: none; }
.quick { display: flex; align-items: center; gap: 6px; padding-left: 4px; width: 240px; }
.handtool { margin: 0 1px; }
.doctitle { flex: 1; font-size: 10px; text-align: center; white-space: nowrap; }
.winbtns { display: flex; align-items: center; gap: 20px; padding-right: 11px; width: 142px; justify-content: flex-end; }

/* Menu tabs */
.menubar { display: flex; align-items: stretch; height: 19px; flex: none; }
.mtab { justify-content: center; }
.file { width: 53px; background: #e8790b; color: #fff; }
.home { width: 50px; }
.mtab.active { width: 72px; background: #fdfdfd; color: #222; border: 1px solid #ccc; border-bottom: 0; font-size: 11px; }
.fill { width: 64px; }
.view { width: 44px; }
.form { width: 45px; }
.protect { width: 56px; }
.share { width: 47px; }
.connect { width: 60px; }
.help { width: 43px; }
.tell { margin-left: 14px; gap: 7px; color: #888; }
.find { display: flex; align-items: center; margin-left: auto; padding-right: 1px; gap: 9px; }
.findbox { display: flex; width: 100px; height: 17px; border: 1px solid #bbb; background: #fff; margin-left: -6px; margin-right: -6px; }
.findbox input { flex: 1; min-width: 0; border: 0; padding: 0 4px; background: none; color: #222; font: inherit; }
.findbox button { width: 16px; justify-content: center; background: #cfe6f7; }
.next { margin-left: 2px; }

/* Ribbon */
.ribbon { display: flex; height: 76px; flex: none; background: #fdfdfd; border-top: 1px solid #ccc; border-bottom: 1px solid #bbb; }
.group { display: flex; flex-direction: column; padding: 2px 0; border-right: 1px solid #ddd; color: #333; }
.gbody { flex: 1; display: flex; }
.glabel { text-align: center; color: #777; line-height: 12px; }
.col { display: flex; flex-direction: column; align-items: flex-start; }
.row { display: flex; align-items: center; gap: 3px; height: 17px; white-space: nowrap; }
.car { margin-left: 3px; }
.g-tools { width: 64px; }
.g-tools .row { margin-left: 4px; padding: 0 4px 0 3px; gap: 2px; }
.on { background: #cbd6f0; }
.g-markup { width: 67px; }
.markup { display: grid; grid-template-columns: repeat(3, 19px); grid-auto-rows: 24px; align-content: center; justify-content: center; }
.markup button { justify-content: center; }
.g-pin { width: 77px; }
.bigs { display: flex; }
.big { flex-direction: column; gap: 1px; justify-content: flex-start; line-height: 13px; }
.big svg { margin-bottom: 1px; }
.big .down { margin-top: 4px; }
.g-pin .bigs { justify-content: center; gap: 11px; padding-top: 2px; }
.g-type { width: 121px; }
.g-type .bigs, .g-stamps .bigs, .g-manage .bigs { padding-top: 2px; }
.g-type .big { margin-left: 6px; margin-right: 6px; }
.bigs > .col { margin-top: -2px; }
.g-draw { width: 223px; }
.shapes { display: grid; grid-template-columns: 20px 20px 20px; grid-auto-rows: 17px; padding-left: 4px; }
.shapes button { justify-content: center; }
.pencils { margin-left: 4px; padding-left: 7px; width: 59px; border-left: 1px solid #ddd; }
.hl { padding: 2px 0 0 4px; border-left: 1px solid #ddd; gap: 4px; }
.g-measure { width: 73px; }
.g-measure .col { padding-left: 6px; }
.g-stamps { width: 79px; }
.g-stamps .bigs { justify-content: center; gap: 8px; }
.g-manage { width: 250px; }
.g-manage .big { margin-left: 7px; width: 48px; }
.c1 { margin-left: 8px; width: 82px; }
.keep { color: #bbb; gap: 2px; }
.keep input { appearance: none; width: 11px; height: 11px; margin: 0; border: 1px solid #ccc; background: #fff; }
.collapse { margin-left: auto; align-self: flex-end; padding: 0 6px 5px; }

/* Document tabs */
.tabs { display: flex; align-items: flex-end; height: 26px; flex: none; border-bottom: 1px solid #bbb; }
.scroll-l { align-self: center; width: 22px; padding-left: 15px; }
.dtab { position: relative; z-index: 1; width: 111px; height: 22px; border-top: 1px solid #aaa; background: #f6f6f6; color: #333; justify-content: flex-start; }
.first { width: 56px; justify-content: flex-end; overflow: hidden; }
.current { width: 138px; background: #fff; justify-content: space-between; padding: 0 0 0 2px; }
.tablist { margin-left: auto; align-self: center; padding-right: 5px; }
.banner { display: flex; align-items: center; justify-content: space-between; width: 134px; height: 25px; padding: 0 13px 0 5px; background: #17c48c; color: #fff; text-decoration: none; font: italic bold 10px/11px "Liberation Sans", Arial, sans-serif; }

/* Work area */
.main { display: flex; flex: 1; min-height: 0; }
.rail { display: flex; flex-direction: column; align-items: stretch; width: 27px; padding-top: 33px; }
.rail button { height: 37px; justify-content: center; }
.rail .sel { height: 38px; background: #fff; border-top: 1px solid #ccc; border-bottom: 1px solid #ccc; }
.pages { display: flex; flex-direction: column; width: 211px; border-left: 1px solid #ccc; }
.phead { display: flex; align-items: center; gap: 8px; height: 21px; padding: 0 6px 0 2px; border-bottom: 1px solid #ccc; }
.phead span { flex: 1; }
.ptools { display: flex; align-items: center; gap: 17px; height: 21px; padding-left: 6px; background: #fff; margin-right: 3px; }
.plist { display: flex; flex: 1; min-height: 0; }
.thumbs { flex: 1; overflow: hidden; padding: 16px 3px 0 0; }
figure { display: flex; flex-direction: column; align-items: center; height: 134px; }
.thumb { width: 84px; height: 113px; border: 1px solid #aaa; background: #fff; box-shadow: 1px 1px 0 #999; }
figcaption { margin-top: 2px; color: #222; font-size: 11px; }
.vs { display: flex; flex-direction: column; align-items: center; justify-content: space-between; width: 12px; padding: 5px 0 4px; margin-right: 3px; }
.vs i { width: 12px; height: 146px; margin: 4px 0 auto; background: #cdcdcd; }
.flip { transform: scaleY(-1); }
.hs { display: flex; align-items: center; justify-content: space-between; height: 12px; padding: 0 21px 0 3px; }
.viewer { flex: 1; min-width: 0; display: flex; overflow: hidden; padding: 0 89px 0 93px; background: #ababab; }
.paper { flex: 1; background: #fff; border: solid #777; border-width: 0 1px; color: #231f20; white-space: nowrap; }
.paper h2 { padding: 16px 0 0 90px; color: #1f6f8b; font: 500 24px/31px Lato, sans-serif; font-variant-ligatures: none; }
.authors { padding: 49px 0 0 90px; font: 17px/20px "Liberation Serif", "Times New Roman", serif; }
.authors sup { font-size: 10px; line-height: 0; }
.affil { padding: 10px 0 0 90px; font: italic 13px/20px "Liberation Serif", "Times New Roman", serif; }
.abstract { display: grid; grid-template-columns: 328px 328px; gap: 26px; margin-top: 33px; padding: 16px 0 17px 90px; background: #e8e8ea; font: 12px/17px "Liberation Sans", Arial, sans-serif; color: #2b2829; }
.abstract h3 { font: inherit; font-weight: bold; }
.acol p { text-align: justify; text-align-last: justify; }
.acol .ragged { text-align-last: left; }
.d { font-family: "Liberation Serif", serif; font-style: normal; }
.dscroll { display: flex; flex-direction: column; align-items: center; width: 14px; padding-bottom: 3px; }
.split { width: 13px; height: 7px; border: 1px solid #999; margin-bottom: 5px; }
.dscroll i { width: 13px; height: 21px; margin: 10px 0 auto; background: #aaa; }

/* Status bar */
.status { display: flex; align-items: center; height: 23px; flex: none; padding-right: 16px; }
.pager { display: flex; align-items: center; gap: 9px; padding-left: 516px; margin-right: auto; }
.pagebox { position: relative; }
.pagebox select { display: block; appearance: none; width: 95px; height: 17px; padding: 0 3px; border: 1px solid #aaa; border-radius: 0; background: #fff; color: #222; font: inherit; }
.pagebox svg { position: absolute; right: 3px; top: 7px; pointer-events: none; }
.views { display: flex; align-items: center; gap: 5px; margin-right: 13px; }
.views button { width: 16px; height: 15px; justify-content: center; }
.views .von { background: #c9d5f2; }
.pct { gap: 12px; margin-right: 3px; }
.zoom { appearance: none; width: 77px; height: 13px; margin: 0 4px 0 6px; background: linear-gradient(#555, #555) no-repeat center / 100% 1px; }
.zoom::-webkit-slider-thumb { appearance: none; width: 5px; height: 8px; background: #222; }
```
